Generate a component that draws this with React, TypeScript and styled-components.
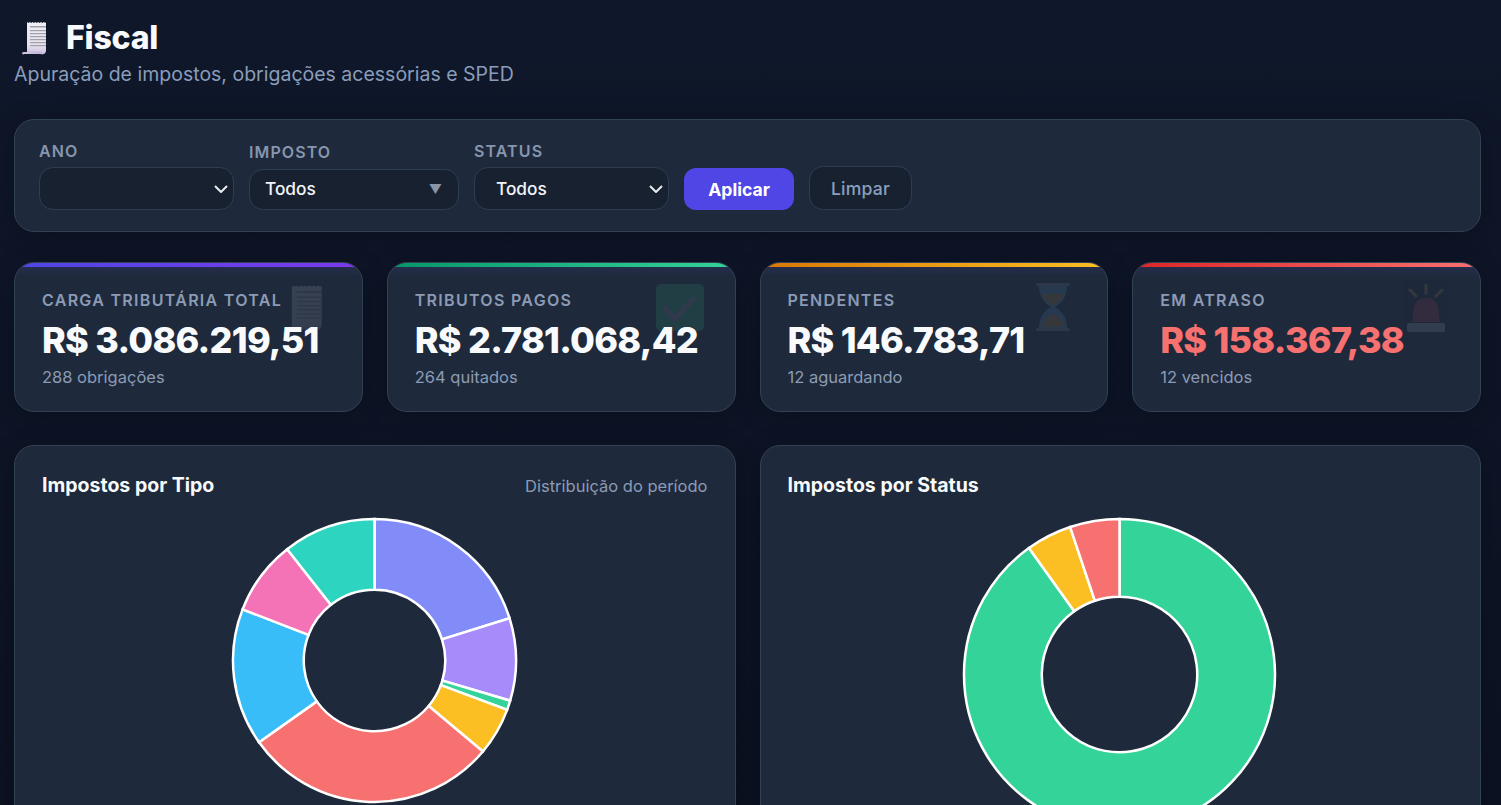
import React from 'react'
import styled, { createGlobalStyle } from 'styled-components'

const GlobalStyle = createGlobalStyle`
  html, body {
    margin: 0;
    padding: 0;
    height: 100%;
    overflow: hidden;
    background: #0b1120;
    font-family: Inter, "Noto Sans", sans-serif;
  }
  * { box-sizing: border-box; }
`

const Page = styled.div`
  min-height: 100vh;
  padding: 0 20px 40px 14px;
  background: linear-gradient(180deg, #0f172a 0%, #0b1120 100%);
`

const Header = styled.header`
  padding-top: 18px;
  margin-bottom: 32px;
`

const Title = styled.h1`
  display: flex;
  align-items: center;
  gap: 16px;
  margin: 0 0 4px;
  padding-left: 8px;
  font-size: 32px;
  line-height: 39px;
  font-weight: 800;
  color: #f8fafc;
  letter-spacing: -0.2px;
`

const Subtitle = styled.p`
  margin: 0;
  font-size: 19.5px;
  line-height: 26px;
  color: #8a9dba;
`

const FilterPanel = styled.section`
  display: flex;
  align-items: flex-end;
  gap: 15px;
  height: 113px;
  padding: 0 24px 21px;
  margin-bottom: 30px;
  background: #1e293b;
  border: 1px solid #334155;
  border-radius: 20px;
  box-shadow: 0 4px 24px rgba(0, 0, 0, 0.25);
`

const Field = styled.label<{ $width: number }>`
  display: flex;
  flex-direction: column;
  gap: 6px;
  width: ${p => p.$width}px;
`

const FieldLabel = styled.span`
  font-size: 16px;
  line-height: 20px;
  font-weight: 600;
  letter-spacing: 1.1px;
  color: #8796ae;
`

const SelectWrap = styled.div`
  position: relative;
`

const Select = styled.select`
  appearance: none;
  display: block;
  height: 43px;
  width: 100%;
  padding: 0 21px;
  background: #182130;
  border: 1px solid #2f3d54;
  border-radius: 14px;
  color: #f1f5f9;
  font: 500 17.3px Inter, sans-serif;
`

const Chevron = styled.svg`
  position: absolute;
  top: 18px;
  right: 6px;
  pointer-events: none;
`

const CustomSelect = styled.div`
  display: flex;
  align-items: center;
  justify-content: space-between;
  height: 41px;
  margin-top: 1px;
  padding: 0 16px 2px 15px;
  background: #182130;
  border: 1px solid #2f3d54;
  border-radius: 14px;
  color: #f1f5f9;
  font-size: 17.3px;
  font-weight: 500;
`

const Caret = styled.span`
  font-size: 13px;
  color: #8b95a8;
`

const ApplyButton = styled.button`
  width: 110px;
  height: 42px;
  background: #4f46e5;
  border: 0;
  border-radius: 12px;
  color: #fff;
  font: 700 17.6px Inter, sans-serif;
`

const ClearButton = styled.button`
  width: 103px;
  height: 44px;
  background: #182130;
  border: 1px solid #2f3d54;
  border-radius: 14px;
  color: #8aa0bd;
  font: 500 17.6px Inter, sans-serif;
  letter-spacing: 0.2px;
`

const KpiGrid = styled.section`
  display: grid;
  grid-template-columns: repeat(4, 1fr);
  gap: 24px;
  margin-bottom: 33px;
`

const KpiCard = styled.article<{ $from: string; $to: string }>`
  position: relative;
  height: 150px;
  padding: 27px 27px 0;
  overflow: hidden;
  background: linear-gradient(180deg, #272f52 0, #1e293b 14px);
  border: 1px solid #334155;
  border-radius: 20px;
  box-shadow: 0 4px 24px rgba(0, 0, 0, 0.25);

  &::before {
    content: '';
    position: absolute;
    top: 0;
    left: 0;
    right: 0;
    height: 4px;
    background: linear-gradient(90deg, ${p => p.$from}, ${p => p.$to});
  }
`

const KpiIcon = styled.div<{ $right: number; $top: number }>`
  position: absolute;
  top: ${p => p.$top}px;
  right: ${p => p.$right}px;
  opacity: 0.12;
`

const KpiLabel = styled.div`
  position: relative;
  font-size: 16px;
  line-height: 20px;
  font-weight: 600;
  letter-spacing: 1.3px;
  color: #8c9bb5;
`

const KpiValue = styled.div<{ $danger?: boolean }>`
  position: relative;
  margin-top: 8px;
  font-size: 36px;
  line-height: 44px;
  font-weight: 800;
  letter-spacing: -0.75px;
  color: ${p => (p.$danger ? '#f87171' : '#f8fafc')};
`

const KpiSub = styled.div`
  position: relative;
  margin-top: 5px;
  font-size: 16.5px;
  line-height: 20px;
  color: #8c9bb5;
`

const ChartGrid = styled.section`
  display: grid;
  grid-template-columns: 1fr 1fr;
  gap: 24px;
`

const ChartCard = styled.article`
  height: 470px;
  padding: 26px 27px;
  background: #1e293b;
  border: 1px solid #334155;
  border-radius: 20px;
  box-shadow: 0 4px 24px rgba(0, 0, 0, 0.25);
`

const ChartHeader = styled.div`
  display: flex;
  align-items: center;
  justify-content: space-between;
  height: 26px;
  margin-bottom: 19px;
`

const ChartTitle = styled.h2`
  margin: 0;
  font-size: 19.5px;
  font-weight: 700;
  color: #f8fafc;
`

const ChartNote = styled.span`
  padding-top: 2px;
  font-size: 16.5px;
  color: #8c9bb5;
`

const DonutBox = styled.div`
  display: flex;
  justify-content: center;
`

// angle in degrees, clockwise from the top
const polar = (c: number, r: number, deg: number) => {
  const a = (deg * Math.PI) / 180
  return `${(c + r * Math.sin(a)).toFixed(2)} ${(c - r * Math.cos(a)).toFixed(2)}`
}

const Donut = ({ radius, slices }: { radius: number; slices: { end: number; color: string }[] }) => {
  const c = radius + 2
  const inner = radius / 2
  let start = 0
  return (
    <svg width={c * 2 + 1} height={c * 2}>
      {slices.map(s => {
        const large = s.end - start > 180 ? 1 : 0
        const d = [
          `M${polar(c, radius, start)}`,
          `A${radius} ${radius} 0 ${large} 1 ${polar(c, radius, s.end)}`,
          `L${polar(c, inner, s.end)}`,
          `A${inner} ${inner} 0 ${large} 0 ${polar(c, inner, start)}`,
          'Z'
        ].join(' ')
        start = s.end
        return <path key={s.end} d={d} fill={s.color} stroke="#fff" strokeWidth={2.5} />
      })}
    </svg>
  )
}

const SelectChevron = () => (
  <Chevron width="14" height="8" viewBox="0 0 14 8">
    <path d="M1 1l6 6 6-6" fill="none" stroke="#e8edf3" strokeWidth="2" />
  </Chevron>
)

const ReceiptIcon = ({ id, width, height }: { id: string; width: number; height: number }) => (
  <svg width={width} height={height} viewBox="0 0 28 34" preserveAspectRatio="none">
    <defs>
      <linearGradient id={id} x1="0" y1="0" x2="0" y2="1">
        <stop offset="0" stopColor="#f1f0f4" />
        <stop offset="0.7" stopColor="#e6e2ec" />
        <stop offset="1" stopColor="#cdbfe0" />
      </linearGradient>
    </defs>
    <path
      d="M5 1l1.4 1 1.4-1 1.4 1 1.4-1 1.4 1 1.4-1 1.400 1 1.400-1 1.400 1 1.400-1 1.400 1 1.400-1 1.400 1 .8-1v28c0 2.400-1 4-3 4H2.500C1 34 0 33 0 31.500c1-.5 4-.5 5-.5z"
      fill={`url(#${id})`}
    />
    <path d="M22 34c-1.500-.7-2-2-2-3.500H4" fill="#b9a9d2" opacity="0.5" />
    <g fill="#a0a0ac">
      <rect x="8" y="5" width="16" height="1.500" />
      <rect x="8" y="9" width="16" height="1.200" />
      <rect x="8" y="12" width="16" height="1.200" />
      <rect x="8" y="15" width="16" height="1.200" />
      <rect x="8" y="18" width="16" height="1.200" />
      <rect x="8" y="21" width="16" height="1.200" />
      <rect x="8" y="24" width="16" height="1.200" />
    </g>
  </svg>
)

const CheckIcon = () => (
  <svg width="48" height="47" viewBox="0 0 48 47">
    <rect width="48" height="47" rx="5" fill="#2fd28a" />
    <path d="M9 24l10 11L37 15" fill="none" stroke="#b9a9d2" strokeWidth="5" strokeLinecap="round" strokeLinejoin="round" />
  </svg>
)

const HourglassIcon = () => (
  <svg width="36" height="48" viewBox="0 0 36 48">
    <path d="M4 3h28c0 12-6 17-12 21 6 4 12 9 12 21H4c0-12 6-17 12-21C10 20 4 15 4 3z" fill="#6ab0dc" />
    <path d="M7 11h22c-2 6-7 9-11 12-4-3-9-6-11-12z" fill="#d89a40" />
    <path d="M7 44c1-7 6-11 11-13 5 2 10 6 11 13z" fill="#d89a40" />
    <rect x="1" width="34" height="3" rx="1.500" fill="#8f9bb0" />
    <rect x="1" y="45" width="34" height="3" rx="1.500" fill="#8f9bb0" />
  </svg>
)

const SirenIcon = () => (
  <svg width="38" height="48" viewBox="0 0 38 48">
    <path d="M19 1v8M3 6l6 6M35 6l-6 6" stroke="#c9a83f" strokeWidth="3" strokeLinecap="round" />
    <path d="M5 38l2-14c1-7 6-10 12-10s11 3 12 10l2 14z" fill="#c8405a" />
    <rect y="39" width="38" height="9" rx="2" fill="#c3cbe0" />
  </svg>
)

const impostoSlices = [
  { end: 72.6, color: '#818cf8' },
  { end: 106.5, color: '#a78bfa' },
  { end: 110.4, color: '#34d399' },
  { end: 130, color: '#fbbf24' },
  { end: 234.7, color: '#f87171' },
  { end: 291.2, color: '#38bdf8' },
  { end: 321.9, color: '#f472b6' },
  { end: 360, color: '#2dd4bf' }
]

const statusSlices = [
  { end: 324.4, color: '#34d399' },
  { end: 341.5, color: '#fbbf24' },
  { end: 360, color: '#f87171' }
]

const kpis = [
  { label: 'CARGA TRIBUTÁRIA TOTAL', value: 'R$ 3.086.219,51', sub: '288 obrigações', from: '#4f46e5', to: '#7c3aed', right: 34, top: 21, icon: <ReceiptIcon id="paperFlat" width={44} height={47} /> },
  { label: 'TRIBUTOS PAGOS', value: 'R$ 2.781.068,42', sub: '264 quitados', from: '#059669', to: '#34d399', right: 31, top: 21, icon: <CheckIcon /> },
  { label: 'PENDENTES', value: 'R$ 146.783,71', sub: '12 aguardando', from: '#d97706', to: '#fbbf24', right: 36, top: 20, icon: <HourglassIcon /> },
  { label: 'EM ATRASO', value: 'R$ 158.367,38', sub: '12 vencidos', from: '#dc2626', to: '#f87171', right: 35, top: 21, icon: <SirenIcon />, danger: true }
]

const App = () => (
  <Page>
    <GlobalStyle />
    <Header>
      <Title>
        <ReceiptIcon id="paper" width={28} height={34} />
        Fiscal
      </Title>
      <Subtitle>Apuração de impostos, obrigações acessórias e SPED</Subtitle>
    </Header>

    <FilterPanel>
      <Field $width={195}>
        <FieldLabel>ANO</FieldLabel>
        <SelectWrap>
          <Select defaultValue="">
            <option value="" />
          </Select>
          <SelectChevron />
        </SelectWrap>
      </Field>
      <Field $width={210}>
        <FieldLabel>IMPOSTO</FieldLabel>
        <CustomSelect>
          Todos
          <Caret>▼</Caret>
        </CustomSelect>
      </Field>
      <Field $width={195}>
        <FieldLabel>STATUS</FieldLabel>
        <SelectWrap>
          <Select defaultValue="Todos">
            <option>Todos</option>
          </Select>
          <SelectChevron />
        </SelectWrap>
      </Field>
      <ApplyButton>Aplicar</ApplyButton>
      <ClearButton>Limpar</ClearButton>
    </FilterPanel>

    <KpiGrid>
      {kpis.map(k => (
        <KpiCard key={k.label} $from={k.from} $to={k.to}>
          <KpiIcon $right={k.right} $top={k.top}>{k.icon}</KpiIcon>
          <KpiLabel>{k.label}</KpiLabel>
          <KpiValue $danger={k.danger}>{k.value}</KpiValue>
          <KpiSub>{k.sub}</KpiSub>
        </KpiCard>
      ))}
    </KpiGrid>

    <ChartGrid>
      <ChartCard>
        <ChartHeader>
          <ChartTitle>Impostos por Tipo</ChartTitle>
          <ChartNote>Distribuição do período</ChartNote>
        </ChartHeader>
        <DonutBox>
          <Donut radius={141.5} slices={impostoSlices} />
        </DonutBox>
      </ChartCard>
      <ChartCard>
        <ChartHeader>
          <ChartTitle>Impostos por Status</ChartTitle>
        </ChartHeader>
        <DonutBox>
          <Donut radius={155.5} slices={statusSlices} />
        </DonutBox>
      </ChartCard>
    </ChartGrid>
  </Page>
)

export default App
